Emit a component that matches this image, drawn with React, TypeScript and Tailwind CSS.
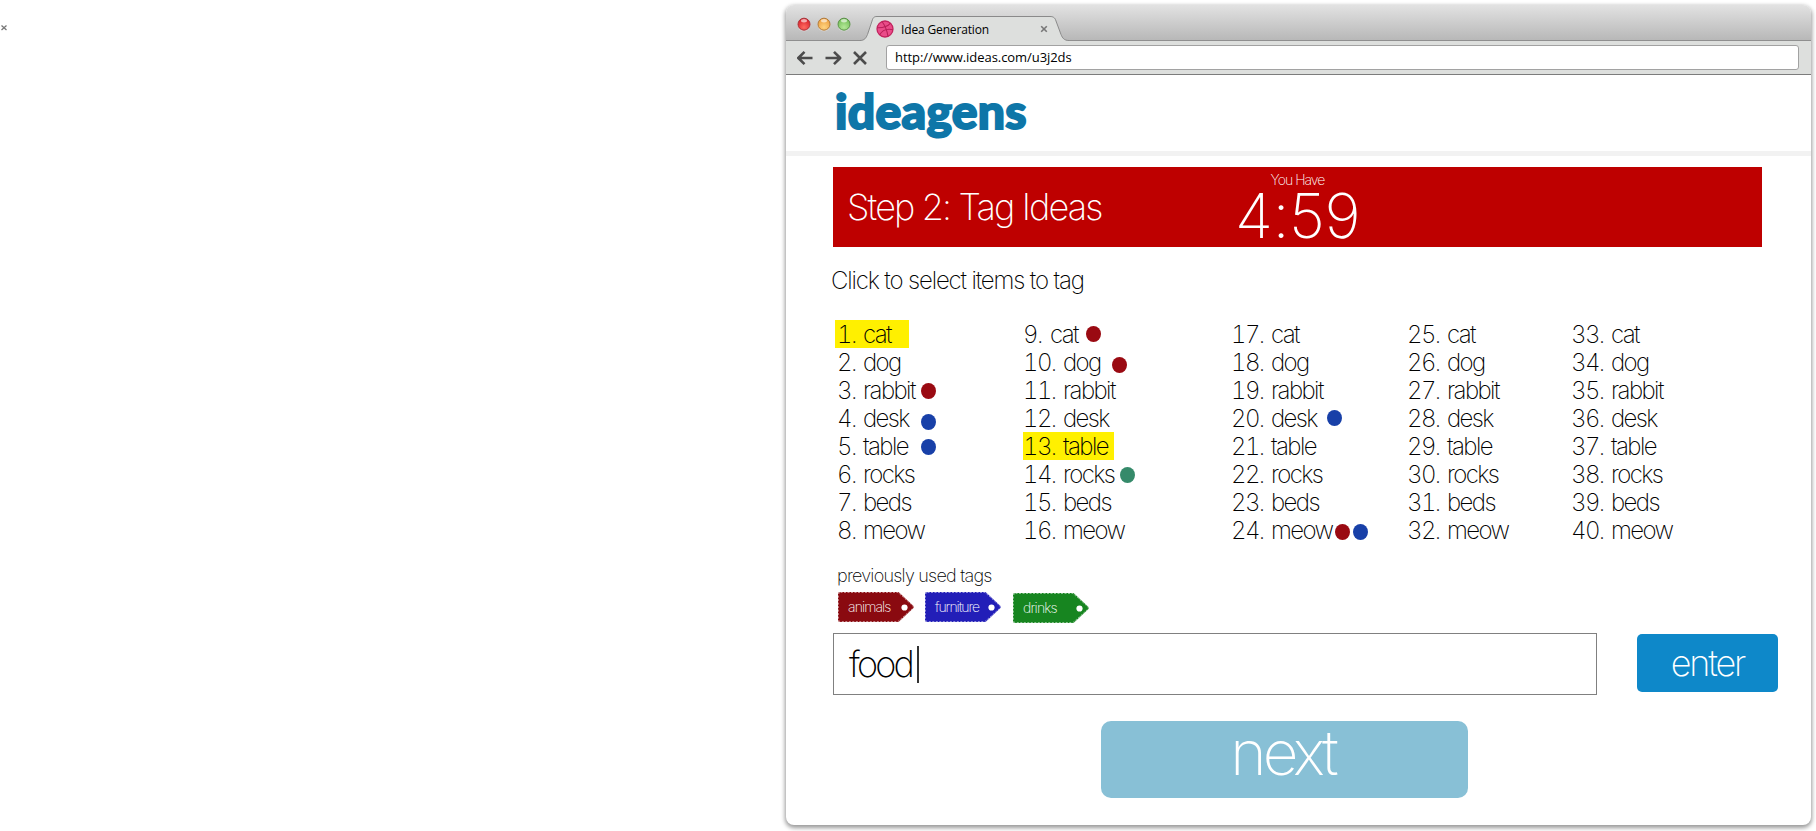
import { clsx } from "clsx";

type Dot = { color: string; pos: string };
type Item = { n: number; word: string; dots?: Dot[]; highlight?: string };

const RED = "bg-[#9a0a12]";
const BLUE = "bg-[#1840a8]";
const GREEN = "bg-[#358a6a]";

const words = ["cat", "dog", "rabbit", "desk", "table", "rocks", "beds", "meow"];

const dots: Record<number, Dot[]> = {
  3: [{ color: RED, pos: "left-[83px] top-[7px]" }],
  4: [{ color: BLUE, pos: "left-[83px] top-[10px]" }],
  5: [{ color: BLUE, pos: "left-[83px] top-[7px]" }],
  9: [{ color: RED, pos: "left-[62px] top-[6px]" }],
  10: [{ color: RED, pos: "left-[88px] top-[9px]" }],
  14: [{ color: GREEN, pos: "left-[96px] top-[7px]" }],
  20: [{ color: BLUE, pos: "left-[95px] top-[6px]" }],
  24: [
    { color: RED, pos: "left-[103px] top-[8px]" },
    { color: BLUE, pos: "left-[121px] top-[8px]" },
  ],
};

const highlights: Record<number, string> = {
  1: "-ml-[3px] w-[74px] pl-[2px] bg-[#fff000]",
  13: "-ml-px w-[91px] bg-[#fff000]",
};

const columnWidths = ["w-[186px]", "w-[208px]", "w-[176px]", "w-[164px]", "w-[120px]"];

const columns: Item[][] = columnWidths.map((_, c) =>
  words.map((word, r) => {
    const n = c * 8 + r + 1;
    return { n, word, dots: dots[n], highlight: highlights[n] };
  }),
);

function IdeaRow({ n, word, dots: marks, highlight }: Item) {
  return (
    <li className={clsx("relative flex h-7 text-2xl leading-[29px] whitespace-nowrap", highlight)}>
      <span
        className={clsx(
          "shrink-0 tabular-nums tracking-[-1.6px]",
          !highlight && "-ml-px",
          n < 9 ? "w-[26px]" : n === 9 ? "w-[27px]" : "w-[40px]",
        )}
      >
        {n}.
      </span>
      <span className="tracking-[-1.6px]">{word}</span>
      {marks?.map((d) => (
        <span key={d.pos} className={clsx("absolute h-4 w-[15px] rounded-[50%]", d.color, d.pos)} />
      ))}
    </li>
  );
}

function Tag({ label, fill, spacing }: { label: string; fill: string; spacing: string }) {
  return (
    <button className="relative block h-[30px] w-[76px] text-left">
      <svg className="absolute inset-0" width="76" height="30" viewBox="0 0 76 30">
        <path
          d="M2 0H60.500L75 13.500Q76.500 15 75 16.500L60.500 30H2Q0 30 0 28V2Q0 0 2 0Z"
          fill={fill}
        />
        <path
          d="M2.500 .5H60L74.5 13.5Q76 15 74.5 16.5L60 29.5H2.5Q.5 29.5 .5 27.5V2.5Q.5 .5 2.5 .5Z"
          fill="none"
          stroke="#fff"
          strokeOpacity=".5"
          strokeDasharray="2 1.500"
        />
        <circle cx="66.500" cy="15.500" r="3.100" fill="#fff" />
      </svg>
      <span className={clsx("relative -mt-0.5 block pl-[10px] text-sm leading-[25px] text-white", spacing)}>{label}</span>
    </button>
  );
}

function Light({ id, from, to, ring }: { id: string; from: string; to: string; ring: string }) {
  return (
    <svg width="14" height="15" viewBox="0 0 14 15">
      <defs>
        <radialGradient id={id} cx=".5" cy=".75" r=".7">
          <stop offset="0" stopColor={to} />
          <stop offset="1" stopColor={from} />
        </radialGradient>
      </defs>
      <circle cx="7" cy="8" r="6.300" fill="#fff" opacity=".5" />
      <circle cx="7" cy="7.200" r="6" fill={`url(#${id})`} stroke={ring} strokeWidth="1" />
      <ellipse cx="7" cy="3.700" rx="3" ry="1.700" fill="#fff" opacity=".6" />
    </svg>
  );
}

function Ball() {
  return (
    <svg width="18" height="18" viewBox="0 0 18 18">
      <circle cx="9" cy="9" r="8" fill="#ea4c89" stroke="#c2255f" strokeWidth="1.300" />
      <g fill="none" stroke="#b81f58" strokeWidth="1.100">
        <path d="M6 1.500C9 5.500 11 10 12 16.300" />
        <path d="M1.200 7.800C7 8 11.500 6.800 14.500 3.200" />
        <path d="M3.600 15C6 10.500 10.500 8.300 17 9.700" />
      </g>
    </svg>
  );
}

export default function App() {
  return (
    <div className="flex h-[831px] w-[1816px] overflow-hidden bg-white font-['Inter','Liberation_Sans',sans-serif] font-extralight text-black">
      <div className="w-[786px] shrink-0 pt-6">
        <svg width="8" height="8" viewBox="0 0 8 8">
          <path d="M1.500 1.500L6.500 6M6.500 1.500L1.500 6" stroke="#777" strokeWidth="1.300" />
        </svg>
      </div>

      <div className="mt-[5px] flex h-[820px] w-[1025px] shrink-0 flex-col overflow-hidden rounded-lg bg-white shadow-[0_2px_4px_1px_rgba(0,0,0,0.4)]">
        <div className="flex h-[36px] shrink-0 items-end border-b border-[#8f8f8f] bg-linear-to-b from-[#e2e2e2] to-[#b8b8b8]">
          <div className="flex gap-1.5 self-start pt-3 pl-[11px]">
            <Light id="r" from="#d8202a" to="#ff6a60" ring="#a8343a" />
            <Light id="y" from="#eda040" to="#ffd480" ring="#b07a3a" />
            <Light id="g" from="#74bf58" to="#b4e898" ring="#5a8f48" />
          </div>
          <div className="relative -mb-px ml-[9px] h-[25px] w-[209px]">
            <svg className="absolute inset-0" width="209" height="25" viewBox="0 0 209 25">
              <path
                d="M0 24.500C4.500 24.500 6 22 7.500 18.500L12 5C13 1.500 14 .5 17 .5H190C193 .5 195 1.500 196 5L201 18.500C202.500 22 204 24.500 209 24.500V25H0Z"
                fill="#dddfdd"
              />
              <path
                d="M0 24.500C4.500 24.500 6 22 7.500 18.500L12 5C13 1.500 14 .5 17 .5H190C193 .5 195 1.500 196 5L201 18.500C202.500 22 204 24.500 209 24.500"
                fill="none"
                stroke="#8a8a8a"
              />
            </svg>
            <div className="relative flex h-[26px] items-center pr-[21px] pl-4">
              <Ball />
              <span className="ml-[7px] grow font-['Open_Sans',sans-serif] text-xs leading-[25px] font-normal tracking-[-0.15px]">
                Idea Generation
              </span>
              <svg width="8" height="8" viewBox="0 0 8 8">
                <path d="M1.200 1.200L6.800 6.800M6.800 1.200L1.200 6.800" stroke="#777" strokeWidth="1.600" />
              </svg>
            </div>
          </div>
        </div>

        <div className="flex h-[34px] shrink-0 items-center border-b border-[#7c7c7c] bg-[#dddfdd] pl-[11px]">
          <svg className="shrink-0" width="72" height="16" viewBox="0 0 72 16" fill="none" stroke="#4c4c4c" strokeWidth="2.600">
            <path d="M15.500 8H2M7.500 1.800L1.300 8L7.500 14.200" strokeLinejoin="round" />
            <path d="M28.500 8H42.500M37 1.800L43.200 8L37 14.200" strokeLinejoin="round" />
            <path d="M57 2L69 14M69 2L57 14" />
          </svg>
          <div className="ml-[17px] h-[25px] w-[913px] rounded-[3px] border border-[#a2a2a2] bg-white pl-2 font-['Open_Sans',sans-serif] text-[13px] leading-[23px] font-normal tracking-[-0.06px]">
            http://www.ideas.com/u3j2ds
          </div>
        </div>

        <header className="h-[76px] shrink-0 pt-[10px] pl-[49px]">
          <h1 className="font-['Lato',sans-serif] text-[48px] leading-[52px] font-black tracking-[0.3px] text-[#0e76a8] [-webkit-text-stroke:2px_#0e76a8]">
            ideagens
          </h1>
        </header>
        <div className="h-[5px] shrink-0 bg-[#f2f2f2]" />

        <main className="px-[47px] pt-[11px]">
          <div className="grid h-20 w-[929px] grid-cols-[1fr_auto_1fr] bg-[#be0000] text-white">
            <h2 className="pt-5 pl-3.5 text-4xl leading-10 font-extralight tracking-[-1.85px]">Step 2: Tag Ideas</h2>
            <div className="flex flex-col items-center pt-[5px]">
              <span className="text-sm leading-4 tracking-[-0.95px]">You Have</span>
              <span className="mt-[3px] text-[62px] leading-[50px] tracking-[-0.5px]">4:59</span>
            </div>
          </div>

          <p className="mt-5 -ml-0.5 text-2xl leading-7 tracking-[-1.15px]">Click to select items to tag</p>

          <div className="mt-[25px] flex pl-[5px]">
            {columns.map((items, c) => (
              <ul key={c} className={clsx("shrink-0", columnWidths[c])}>
                {items.map((it) => (
                  <IdeaRow key={it.n} {...it} />
                ))}
              </ul>
            ))}
          </div>

          <p className="mt-[19px] pl-1 text-lg leading-[25px] tracking-[-0.76px]">previously used tags</p>

          <div className="mt-1 flex h-[31px] pl-[5px]">
            <Tag label="animals" fill="#8a0a10" spacing="tracking-[-0.9px]" />
            <div className="ml-[11px]">
              <Tag label="furniture" fill="#221eb8" spacing="tracking-[-1.05px]" />
            </div>
            <div className="ml-3 pt-px">
              <Tag label="drinks" fill="#178520" spacing="tracking-[-0.8px]" />
            </div>
          </div>

          <div className="mt-2.5 flex">
            <div className="flex h-[62px] w-[764px] shrink-0 items-center border border-[#808080] pl-[15px]">
              <span className="text-4xl leading-[58px] tracking-[-2.8px]">food</span>
              <span className="ml-[5px] h-[37px] w-[1.5px] bg-[#333]" />
            </div>
            <button className="mt-px ml-10 h-[58px] w-[141px] shrink-0 rounded-[5px] bg-[#0e88c9] text-4xl leading-[58px] tracking-[-2.2px] text-white">
              enter
            </button>
          </div>

          <button className="mt-[26px] ml-[268px] block h-[77px] w-[367px] rounded-[10px] bg-[#88c0d6] text-[62px] leading-[62px] tracking-[-3.9px] text-white">
            <span className="block pr-1 pb-[13px]">next</span>
          </button>
        </main>
      </div>
    </div>
  );
}
